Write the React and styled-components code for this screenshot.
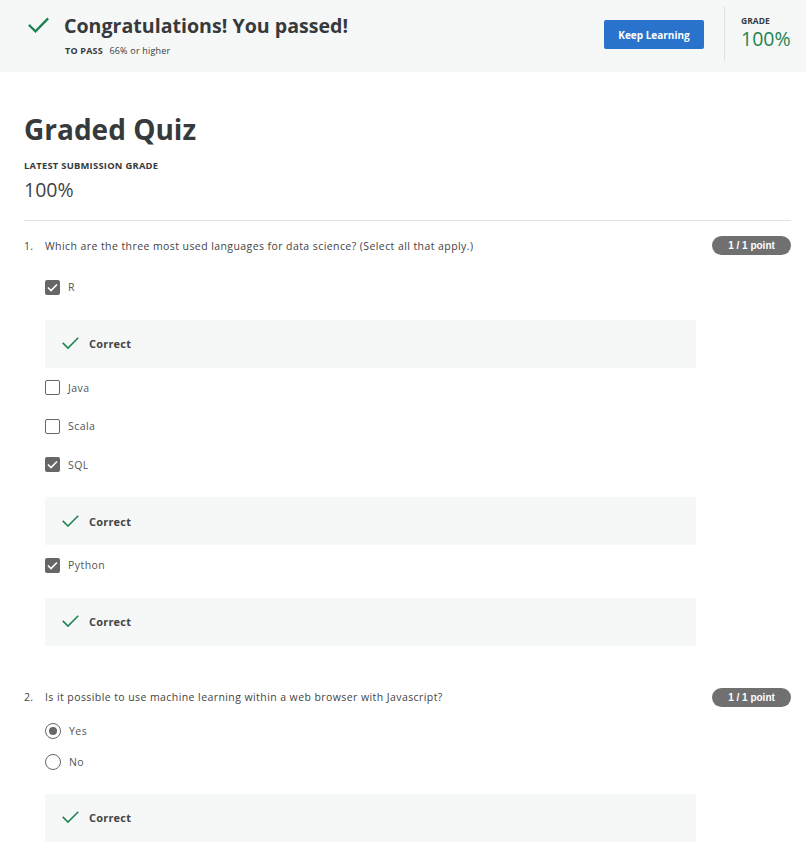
import React from "react";
import styled, { createGlobalStyle } from "styled-components";

const Global = createGlobalStyle`
  html, body { margin: 0; padding: 0; background: #fff; }
  body { font-family: "Open Sans", "Noto Sans", sans-serif; color: #373a3c; }
  * { box-sizing: border-box; }
`;

const Banner = styled.header`
  display: flex;
  height: 72px;
  background: #f5f8f7;
  padding-left: 28px;
`;

const BannerIcon = styled.div`
  padding-top: 17px;
  width: 36px;
`;

const BannerText = styled.div`
  flex: 1;
  padding-top: 12px;
`;

const BannerTitle = styled.h1`
  margin: 0;
  font-size: 19.6px;
  line-height: 28px;
  font-weight: 700;
  color: #373a3c;
`;

const PassLine = styled.div`
  margin-top: 5px;
  padding-left: 1px;
  font-size: 9px;
  line-height: 12px;
  letter-spacing: 0.2px;
  color: #373a3c;
  & b { font-weight: 700; margin-right: 4px; }
`;

const ButtonWrap = styled.div`
  display: flex;
  align-items: flex-start;
  padding-top: 20px;
  padding-right: 20px;
`;

const PrimaryButton = styled.button`
  width: 100px;
  height: 29px;
  border: none;
  border-radius: 2px;
  background: #2a73cc;
  color: #fff;
  font-family: "Open Sans", sans-serif;
  font-weight: 700;
  font-size: 10px;
  cursor: pointer;
`;

const GradeBox = styled.div`
  width: 82px;
  margin: 6px 0 11px;
  border-left: 1px solid #e1e1e1;
  padding: 9px 0 0 16px;
`;

const GradeLabel = styled.div`
  font-size: 8.5px;
  font-weight: 700;
  line-height: 12px;
  color: #373a3c;
`;

const GradeValue = styled.div`
  font-size: 19.5px;
  line-height: 24px;
  color: #1f8354;
`;

const Main = styled.main`
  padding: 0 15px 0 24px;
`;

const PageTitle = styled.h2`
  margin: 38px 0 0;
  font-size: 28px;
  line-height: 38px;
  font-weight: 700;
  color: #373a3c;
`;

const SubLabel = styled.div`
  margin-top: 12px;
  font-size: 9.4px;
  letter-spacing: 0.25px;
  font-weight: 700;
  line-height: 12px;
`;

const SubValue = styled.div`
  margin-top: 6px;
  font-size: 19.5px;
  line-height: 24px;
  font-weight: 400;
  color: #444;
`;

const Rule = styled.hr`
  margin: 18px 0 15px;
  border: none;
  border-top: 1px solid #e1e1e1;
`;

const QuestionBlock = styled.section`
  margin-bottom: ${(p) => p.$gap || 0}px;
`;

const QuestionHead = styled.div`
  display: flex;
  align-items: center;
  height: 19px;
`;

const QNum = styled.span`
  width: 21px;
  font-size: 10.5px;
  letter-spacing: 0.3px;
  color: #444;
`;

const QText = styled.span`
  flex: 1;
  font-size: 10.5px;
  letter-spacing: 0.42px;
  color: #444;
`;

const Badge = styled.span`
  width: 79px;
  height: 19px;
  border-radius: 10px;
  background: #707070;
  color: #fff;
  font-family: "Liberation Sans", Arial, sans-serif;
  font-weight: 700;
  font-size: 10px;
  display: flex;
  align-items: center;
  justify-content: center;
`;

const Options = styled.div`
  padding-left: 21px;
  margin-top: ${(p) => p.$top}px;
  width: 672px;
`;

const OptionRow = styled.div`
  display: flex;
  align-items: center;
  gap: 8px;
  height: ${(p) => p.$h}px;
  font-size: 10.5px;
  letter-spacing: 0.45px;
  color: #555;
`;

const Box = styled.span`
  width: 15px;
  height: 15px;
  border-radius: 2px;
  display: flex;
  align-items: center;
  justify-content: center;
  background: ${(p) => (p.$checked ? "#666" : "#fff")};
  border: ${(p) => (p.$checked ? "none" : "1.5px solid #666")};
`;

const Radio = styled.span`
  width: 16px;
  height: 16px;
  border-radius: 50%;
  border: 1.5px solid #666;
  display: flex;
  align-items: center;
  justify-content: center;
  &::after {
    content: "";
    width: 8px;
    height: 8px;
    border-radius: 50%;
    background: ${(p) => (p.$checked ? "#666" : "transparent")};
  }
`;

const Feedback = styled.div`
  display: flex;
  align-items: center;
  gap: 10px;
  height: 48px;
  margin: ${(p) => p.$top}px 0 ${(p) => p.$bottom}px;
  padding-left: 17px;
  background: #f5f8f7;
  font-size: 11px;
  letter-spacing: 0.2px;
  font-weight: 700;
  color: #444;
`;

const Check = ({ size = 16, stroke = 2 }) => (
  <svg width={size} height={size * 0.75} viewBox="0 0 20 15" fill="none">
    <path d="M1.5 7.5 L7 13 L18.5 1.5" stroke="#1f8354" strokeWidth={stroke} strokeLinecap="square" />
  </svg>
);

const BigCheck = () => (
  <svg width="21" height="17" viewBox="0 0 21 17" fill="none">
    <path d="M1.8 8.8 L7.5 14.3 L19.3 2.3" stroke="#1f8354" strokeWidth="2.4" strokeLinecap="square" />
  </svg>
);

const TinyCheck = () => (
  <svg width="11" height="9" viewBox="0 0 11 9" fill="none">
    <path d="M1 4.5 L4 7.5 L10 1.5" stroke="#fff" strokeWidth="1.6" />
  </svg>
);

const CorrectBox = ({ top = 13, bottom = 2 }) => (
  <Feedback $top={top} $bottom={bottom}>
    <Check size={17} stroke={1.8} />
    <span>Correct</span>
  </Feedback>
);

const q1 = [
  { label: "R", checked: true },
  { label: "Java", checked: false },
  { label: "Scala", checked: false },
  { label: "SQL", checked: true },
  { label: "Python", checked: true },
];

export default function App() {
  return (
    <>
      <Global />
      <Banner>
        <BannerIcon>
          <BigCheck />
        </BannerIcon>
        <BannerText>
          <BannerTitle>Congratulations! You passed!</BannerTitle>
          <PassLine>
            <b>TO PASS</b> 66% or higher
          </PassLine>
        </BannerText>
        <ButtonWrap>
          <PrimaryButton>Keep Learning</PrimaryButton>
        </ButtonWrap>
        <GradeBox>
          <GradeLabel>GRADE</GradeLabel>
          <GradeValue>100%</GradeValue>
        </GradeBox>
      </Banner>
      <Main>
        <PageTitle>Graded Quiz</PageTitle>
        <SubLabel>LATEST SUBMISSION GRADE</SubLabel>
        <SubValue>100%</SubValue>
        <Rule />
        <QuestionBlock $gap={42}>
          <QuestionHead>
            <QNum>1.</QNum>
            <QText>Which are the three most used languages for data science? (Select all that apply.)</QText>
            <Badge>1 / 1 point</Badge>
          </QuestionHead>
          <Options $top={13}>
            {q1.map((o, i) => (
              <React.Fragment key={o.label}>
                <OptionRow $h={38.5}>
                  <Box $checked={o.checked}>{o.checked && <TinyCheck />}</Box>
                  <span>{o.label}</span>
                </OptionRow>
                {o.checked && <CorrectBox top={13} bottom={i === q1.length - 1 ? 0 : 1} />}
              </React.Fragment>
            ))}
          </Options>
        </QuestionBlock>
        <QuestionBlock>
          <QuestionHead>
            <QNum>2.</QNum>
            <QText>Is it possible to use machine learning within a web browser with Javascript?</QText>
            <Badge>1 / 1 point</Badge>
          </QuestionHead>
          <Options $top={9}>
            <OptionRow $h={31}>
              <Radio $checked />
              <span>Yes</span>
            </OptionRow>
            <OptionRow $h={31}>
              <Radio />
              <span>No</span>
            </OptionRow>
            <CorrectBox top={16} bottom={0} />
          </Options>
        </QuestionBlock>
      </Main>
    </>
  );
}
